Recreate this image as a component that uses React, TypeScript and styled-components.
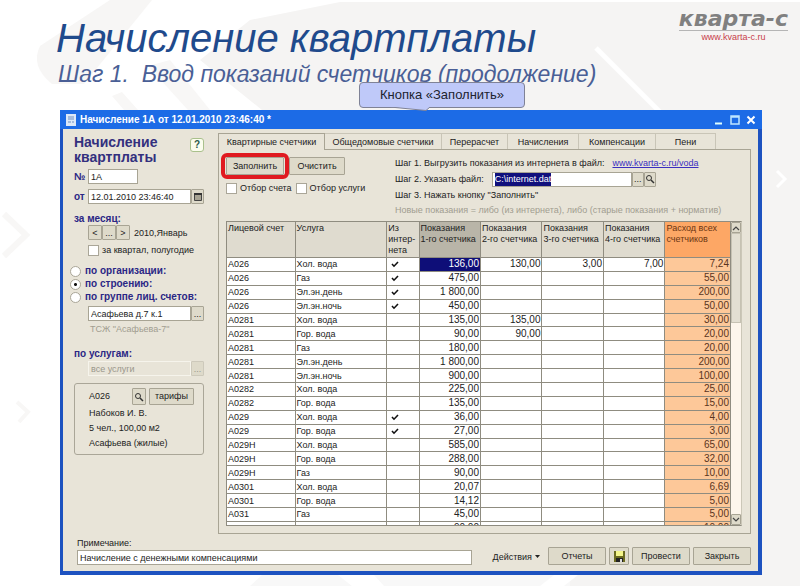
import React from "react";
import styled, { createGlobalStyle, css } from "styled-components";

const Global = createGlobalStyle`
  * { box-sizing: border-box; }
  body { margin: 0; background: #fff; font-family: "Liberation Sans", Arial, sans-serif; }
  button, input { font: inherit; color: inherit; }
`;

const Slide = styled.main`
  position: relative;
  padding: 18px 38px 11px 60px;
  overflow: hidden;
`;
const Backdrop = styled.svg`
  position: absolute;
  inset: 0;
  width: 100%;
  height: 100%;
  z-index: -1;
`;
const Header = styled.header`
  position: relative;
  height: 92px;
`;
const Title = styled.h1`
  margin: 0 0 0 -4px;
  font-size: 40px;
  line-height: 40px;
  font-weight: 400;
  font-style: italic;
  color: #1f4a8c;
  white-space: nowrap;
`;
const Subtitle = styled.p`
  margin: 4px 0 0 -2px;
  font-size: 23px;
  line-height: 24px;
  font-style: italic;
  color: #4a5f96;
  white-space: pre;
`;
const Brand = styled.div`
  position: absolute;
  top: -10px;
  right: -26px;
  display: flex;
  flex-direction: column;
  align-items: center;
`;
const BrandName = styled.strong`
  font-family: "DejaVu Sans", sans-serif;
  font-size: 22px;
  line-height: 22px;
  font-style: italic;
  color: #808080;
  border-bottom: 1px solid #b5b5b5;
`;
const BrandLink = styled.a`
  font-size: 9px;
  line-height: 12px;
  color: #c8404a;
  text-decoration: none;
`;
const Callout = styled.div`
  position: absolute;
  top: 64px;
  left: 299px;
  width: 166px;
  height: 26px;
  border: 1px solid #7f8296;
  border-radius: 4px;
  background: #bfc9f9;
  color: #20232e;
  font-size: 13px;
  line-height: 24px;
  text-align: center;
  white-space: nowrap;
`;
const CalloutTail = styled.svg`
  position: absolute;
  top: 24px;
  left: 30px;
`;

const Window = styled.section`
  border: solid #1d52c0;
  border-width: 0 4px 4px 3px;
  background: #e8e4d8;
  font-size: 9px;
  line-height: 12px;
  color: #222;
  white-space: nowrap;
`;
const TitleBar = styled.div`
  display: flex;
  align-items: center;
  gap: 4px;
  height: 19px;
  margin: 0 -4px 0 -3px;
  padding: 1px 6px;
  background: #1c6be6;
  color: #fff;
  font-size: 10px;
  font-weight: 700;
`;
const WindowTitle = styled.span`
  flex: 1;
`;
const WindowButton = styled.button`
  display: flex;
  padding: 0;
  margin-left: 2px;
  border: 0;
  background: none;
`;
const Body = styled.div`
  display: grid;
  grid-template-columns: 155px 1fr;
  padding: 4px 7px 0 0;
`;

const Side = styled.aside`
  display: flex;
  flex-direction: column;
  padding: 2px 14px 0 11px;
`;
const SideHead = styled.div`
  display: flex;
  justify-content: space-between;
  align-items: flex-start;
  margin-bottom: 4px;
`;
const SideTitle = styled.h2`
  margin: 0;
  font-size: 14px;
  line-height: 15px;
  color: #33307e;
`;
const HelpButton = styled.button`
  width: 14px;
  height: 14px;
  margin-top: 3px;
  padding: 0;
  border: 1px solid #a9c08c;
  border-radius: 3px;
  background: #fbfdee;
  font-size: 10px;
  font-weight: 700;
  line-height: 10px;
  color: #2b5a4a;
`;
const Line = styled.div<{ $gap?: number; $indent?: boolean }>`
  display: flex;
  align-items: center;
  margin-bottom: ${(p) => p.$gap ?? 0}px;
  padding-left: ${(p) => (p.$indent ? 14 : 0)}px;
`;
const Caption = styled.label<{ $narrow?: boolean }>`
  ${(p) => p.$narrow && css`width: 14px;`}
  font-size: 10px;
  font-weight: 700;
  color: #2b2785;
`;
const Field = styled.input<{ $w?: number }>`
  ${(p) => (p.$w ? css`width: ${p.$w}px;` : css`flex: 1;`)}
  min-width: 0;
  height: 15px;
  padding: 0 2px;
  border: 1px solid #a8a494;
  border-radius: 0;
  background: #fff;
  &:disabled { background: #e8e4d8; color: #9a978b; border-color: #f6f4ec; }
`;
const Push = styled.button<{ $w?: number; $h?: number }>`
  display: flex;
  align-items: center;
  justify-content: center;
  ${(p) => p.$w && css`width: ${p.$w}px;`}
  height: ${(p) => p.$h ?? 15}px;
  padding: 0;
  border: 1px solid #a8a494;
  border-radius: 1px;
  background: #dedaca;
  &:disabled { color: #9a978b; border-color: #cdc9bb; }
`;
const Value = styled.span<{ $dim?: boolean }>`
  margin-left: ${(p) => (p.$dim ? 2 : 4)}px;
  color: ${(p) => (p.$dim ? "#a19d90" : "inherit")};
`;
const Check = styled.input`
  appearance: none;
  width: 11px;
  height: 11px;
  margin: 0 3px 0 0;
  border: 1px solid #aaa698;
  background: #fff;
`;
const Radio = styled.input`
  appearance: none;
  width: 11px;
  height: 11px;
  margin: 0 4px 0 -4px;
  border: 1px solid #aaa698;
  border-radius: 50%;
  background: #fff;
  &:checked { background: radial-gradient(circle, #111 0 1px, #fff 2px); }
`;
const Account = styled.div`
  display: flex;
  flex-direction: column;
  height: 72px;
  padding: 4px 9px 0 14px;
  border: 1px solid #aaa698;
  border-radius: 3px;
  line-height: 15px;
`;
const AccountHead = styled.div`
  display: grid;
  grid-template-columns: 1fr 14px 45px;
  column-gap: 3px;
  align-items: center;
  margin-bottom: 1px;
`;

const Main = styled.section`
  min-width: 0;
`;
const Tabs = styled.div`
  display: flex;
  height: 16px;
`;
const Tab = styled.button<{ $w: number; $active?: boolean }>`
  width: ${(p) => p.$w}px;
  padding: 0;
  border: solid #c9c5b7;
  border-width: 1px 1px 0 0;
  background: none;
  ${(p) =>
    p.$active &&
    css`
      position: relative;
      height: 17px;
      border-color: #a8a494;
      border-left-width: 1px;
      background: #e8e4d8;
    `}
`;
const Panel = styled.div`
  height: 385px;
  padding: 5px 8px 0 7px;
  border: 1px solid #a8a494;
`;
const Tools = styled.div`
  display: grid;
  grid-template-columns: 169px 1fr;
  height: 66px;
`;
const ToolButtons = styled.div`
  display: flex;
  gap: 4px;
  margin: 2px 0 7px 1px;
`;
const Ring = styled.div`
  margin: -4px -4px -4px -6px;
  border: 4px solid #e01a20;
  border-radius: 6px;
  padding: 0 1px;
`;
const Steps = styled.div`
  display: flex;
  flex-direction: column;
  line-height: 16px;
`;
const StepLink = styled.a`
  margin-left: 8px;
  color: #3a2fc0;
`;
const FileField = styled(Field)`
  margin-left: 8px;
  &:focus { outline: none; }
  &::selection { background: #10107c; color: #fff; }
`;
const Hint = styled.span`
  line-height: 14px;
  color: #a19d90;
`;

const Sheet = styled.div`
  display: flex;
  height: 305px;
  border: 1px solid #8f8c80;
  border-right-color: #cbc7b8;
`;
const Clip = styled.div`
  flex: 1;
  overflow: hidden;
`;
const Table = styled.table`
  width: 100%;
  height: 314px;
  table-layout: fixed;
  border-collapse: separate;
  border-spacing: 0;
`;
const Th = styled.th<{ $tone?: "dark" | "sum" }>`
  height: 36px;
  padding: 1px 0 0 1px;
  border: solid #8f8c80;
  border-width: 0 1px 1px 0;
  background: ${(p) => (p.$tone === "dark" ? "#b9b5a8" : p.$tone === "sum" ? "#fda765" : "#dfdbcf")};
  color: ${(p) => (p.$tone === "sum" ? "#6b3512" : "#222")};
  font-weight: 400;
  line-height: 11px;
  text-align: left;
  vertical-align: top;
  white-space: pre;
`;
const Td = styled.td<{ $kind?: "num" | "sum" | "picked" | "mark" }>`
  padding: 0 1px;
  border: solid #8f8c80;
  border-width: 0 1px 1px 0;
  background: #fff;
  line-height: 12px;
  text-align: left;
  ${(p) =>
    (p.$kind === "num" || p.$kind === "sum" || p.$kind === "picked") &&
    css`text-align: right; font-size: 10px;`}
  ${(p) => p.$kind === "sum" && css`background: #fdc899; color: #5a3420;`}
  ${(p) => p.$kind === "picked" && css`background: #0e0e78; color: #fff;`}
  ${(p) => p.$kind === "mark" && css`padding-left: 4px;`}
  svg { display: block; }
`;
const ScrollBar = styled.div`
  display: flex;
  flex-direction: column;
  justify-content: space-between;
  width: 10px;
  background: #fdf6ec;
`;
const ScrollThumb = styled.div`
  flex: 0 0 90px;
  margin-bottom: auto;
  border: 1px solid #c6c2b3;
  background: #e3dfd2;
`;

const Footer = styled.footer`
  display: flex;
  align-items: flex-end;
  gap: 3px;
  padding: 3px 7px 6px 14px;
`;
const Note = styled.div`
  flex: 1;
  display: flex;
  flex-direction: column;
  gap: 1px;
  margin-right: 14px;
`;
const NoteInput = styled(Field)`
  flex: none;
  width: 100%;
`;
const Menu = styled.button`
  display: flex;
  align-items: center;
  gap: 3px;
  height: 17px;
  padding: 0 5px 0 4px;
  border: 0;
  background: none;
`;

const Magnifier = () => (
  <svg width="10" height="10" viewBox="0 0 10 10" fill="none" stroke="#333">
    <circle cx="4" cy="4" r="2.5" />
    <path d="M6 6l3 3" strokeWidth="1.5" />
  </svg>
);
const Tick = () => (
  <svg width="8" height="8" viewBox="0 0 8 8" fill="none" stroke="#111" strokeWidth="1.6">
    <path d="M1 4l2 2.2L7 2" />
  </svg>
);
const Chevron = ({ down }: { down?: boolean }) => (
  <svg width="8" height="6" viewBox="0 0 8 6" fill="none" stroke="#444" strokeWidth="1.2">
    <path d={down ? "M1 1l3 3 3-3" : "M1 5l3-3 3 3"} />
  </svg>
);

type Row = [string, string, boolean, string, string, string, string, string];
const rows: Row[] = [
  ["А026", "Хол. вода", true, "136,00", "130,00", "3,00", "7,00", "7,24"],
  ["А026", "Газ", true, "475,00", "", "", "", "55,00"],
  ["А026", "Эл.эн.день", true, "1 800,00", "", "", "", "200,00"],
  ["А026", "Эл.эн.ночь", true, "450,00", "", "", "", "50,00"],
  ["А0281", "Хол. вода", false, "135,00", "135,00", "", "", "30,00"],
  ["А0281", "Гор. вода", false, "90,00", "90,00", "", "", "20,00"],
  ["А0281", "Газ", false, "180,00", "", "", "", "20,00"],
  ["А0281", "Эл.эн.день", false, "1 800,00", "", "", "", "200,00"],
  ["А0281", "Эл.эн.ночь", false, "900,00", "", "", "", "100,00"],
  ["А0282", "Хол. вода", false, "225,00", "", "", "", "25,00"],
  ["А0282", "Гор. вода", false, "135,00", "", "", "", "15,00"],
  ["А029", "Хол. вода", true, "36,00", "", "", "", "4,00"],
  ["А029", "Гор. вода", true, "27,00", "", "", "", "3,00"],
  ["А029Н", "Хол. вода", false, "585,00", "", "", "", "65,00"],
  ["А029Н", "Гор. вода", false, "288,00", "", "", "", "32,00"],
  ["А029Н", "Газ", false, "90,00", "", "", "", "10,00"],
  ["А0301", "Хол. вода", false, "20,07", "", "", "", "6,69"],
  ["А0301", "Гор. вода", false, "14,12", "", "", "", "5,00"],
  ["А031", "Газ", false, "45,00", "", "", "", "5,00"],
  ["А032", "Хол. вода", false, "90,00", "", "", "", "10,00"],
];
const columns: { label: string; width: string; tone?: "dark" | "sum" }[] = [
  { label: "Лицевой счет", width: "13.6%" },
  { label: "Услуга", width: "18.2%" },
  { label: "Из\nинтер-\nнета", width: "6.4%" },
  { label: "Показания\n1-го счетчика", width: "12.2%", tone: "dark" },
  { label: "Показания\n2-го счетчика", width: "12.2%" },
  { label: "Показания\n3-го счетчика", width: "12.2%" },
  { label: "Показания\n4-го счетчика", width: "12.2%" },
  { label: "Расход всех\nсчетчиков", width: "13%", tone: "sum" },
];
const tabs: [string, number][] = [
  ["Квартирные счетчики", 107],
  ["Общедомовые счетчики", 117],
  ["Перерасчет", 66],
  ["Начисления", 71],
  ["Компенсации", 77],
  ["Пени", 60],
];

export default function App() {
  const file = React.useRef<HTMLInputElement>(null);
  React.useEffect(() => {
    file.current?.focus({ preventScroll: true });
    file.current?.select();
  }, []);

  return (
    <>
      <Global />
      <Slide>
        <Backdrop viewBox="0 0 800 586" preserveAspectRatio="none">
          <path d="M340 2H800V586H570V110H262L200 60L250 20Z" fill="#f5f4f3" />
          <path d="M110 0H152L84 84H52Q30 66 40 46Z" fill="#f7f6f5" />
          <path d="M170 60l40 50h-22l-40-44z" fill="#f8f7f6" />
          <path d="M112 96l10-4 16 18h-14z" fill="#f8f7f6" />
          <path d="M596 48l64 64" stroke="#fff" strokeWidth="5" />
          <path d="M777 171l8 8-8 8" stroke="#fff" strokeWidth="3" fill="none" />
          <path d="M17 402l11 10-9 10" stroke="#f8f7f6" strokeWidth="4" fill="none" />
          <path d="M4 214l22 21-22 21" stroke="#f8f7f6" strokeWidth="6" fill="none" />
          <path d="M250 586l12-11h76l14 11zM374 575h196v11H384z" fill="#f8f8f8" />
          <path d="M540 586l14-11h24l-14 11z" fill="#fff" />
        </Backdrop>
        <Header>
          <Title>Начисление квартплаты</Title>
          <Subtitle>Шаг 1.  Ввод показаний счетчиков (продолжение)</Subtitle>
          <Brand>
            <BrandName>кварта-с</BrandName>
            <BrandLink href="#">www.kvarta-c.ru</BrandLink>
          </Brand>
          <Callout>
            Кнопка «Заполнить»
            <CalloutTail width="42" height="4" viewBox="0 0 42 4">
              <path d="M0 0L36 3.5L40 0" fill="#bfc9f9" stroke="#7f8296" />
            </CalloutTail>
          </Callout>
        </Header>

        <Window>
          <TitleBar>
            <svg width="10" height="12" viewBox="0 0 10 12">
              <path d="M0 0h10v12H0z" fill="#dce8f8" />
              <path d="M2 3h6M2 5h6M2 8h3M6 8h2" stroke="#6d8fc4" />
            </svg>
            <WindowTitle>Начисление 1А от 12.01.2010 23:46:40 *</WindowTitle>
            <WindowButton aria-label="Свернуть">
              <svg width="10" height="10"><path d="M1 8.500h7" stroke="#dff" strokeWidth="2" /></svg>
            </WindowButton>
            <WindowButton aria-label="Развернуть">
              <svg width="10" height="10"><path d="M1 1h8v8H1zM1 2h8" stroke="#bfe6ff" strokeWidth="1.500" fill="none" /></svg>
            </WindowButton>
            <WindowButton aria-label="Закрыть окно">
              <svg width="10" height="10"><path d="M1.500 1.500l7 7M8.500 1.500l-7 7" stroke="#fff" strokeWidth="2" /></svg>
            </WindowButton>
          </TitleBar>

          <Body>
            <Side>
              <SideHead>
                <SideTitle>Начисление<br />квартплаты</SideTitle>
                <HelpButton aria-label="Справка">?</HelpButton>
              </SideHead>
              <Line $gap={5}>
                <Caption $narrow htmlFor="num">№</Caption>
                <Field id="num" $w={50} defaultValue="1А" />
              </Line>
              <Line $gap={9}>
                <Caption $narrow htmlFor="date">от</Caption>
                <Field id="date" defaultValue="12.01.2010 23:46:40" />
                <Push $w={13} aria-label="Календарь">
                  <svg width="8" height="8"><path d="M.5 1.500h7v6h-7z" fill="#a7a393" stroke="#444" /><path d="M0 1h8" stroke="#333" strokeWidth="2" /></svg>
                </Push>
              </Line>
              <Line><Caption as="span">за месяц:</Caption></Line>
              <Line $indent $gap={4}>
                <Push $w={14} aria-label="Предыдущий месяц">&lt;</Push>
                <Push $w={14} aria-label="Выбрать месяц">...</Push>
                <Push $w={14} aria-label="Следующий месяц">&gt;</Push>
                <Value>2010,Январь</Value>
              </Line>
              <Line $indent $gap={9}>
                <Check type="checkbox" id="quarter" />
                <label htmlFor="quarter">за квартал, полугодие</label>
              </Line>
              <Line $gap={1}>
                <Radio type="radio" name="scope" id="org" />
                <Caption htmlFor="org">по организации:</Caption>
              </Line>
              <Line $gap={1}>
                <Radio type="radio" name="scope" id="house" defaultChecked />
                <Caption htmlFor="house">по строению:</Caption>
              </Line>
              <Line $gap={3}>
                <Radio type="radio" name="scope" id="group" />
                <Caption htmlFor="group">по группе лиц. счетов:</Caption>
              </Line>
              <Line $indent $gap={2}>
                <Field aria-label="Строение" defaultValue="Асафьева д.7 к.1" />
                <Push $w={13} aria-label="Выбрать строение">...</Push>
              </Line>
              <Line $indent $gap={13}><Value $dim>ТСЖ "Асафьева-7"</Value></Line>
              <Line $gap={1}><Caption htmlFor="services">по услугам:</Caption></Line>
              <Line $indent $gap={7}>
                <Field id="services" disabled defaultValue="все услуги" />
                <Push $w={13} disabled aria-label="Выбрать услуги">...</Push>
              </Line>
              <Account>
                <AccountHead>
                  <span>А026</span>
                  <Push $h={17} aria-label="Найти счет"><Magnifier /></Push>
                  <Push $h={17}>тарифы</Push>
                </AccountHead>
                <span>Набоков И. В.</span>
                <span>5 чел., 100,00 м2</span>
                <span>Асафьева (жилые)</span>
              </Account>
            </Side>

            <Main>
              <Tabs role="tablist">
                {tabs.map(([name, w], i) => (
                  <Tab key={name} role="tab" aria-selected={i === 0} $w={w} $active={i === 0}>{name}</Tab>
                ))}
              </Tabs>
              <Panel>
                <Tools>
                  <div>
                    <ToolButtons>
                      <Ring><Push $w={58} $h={18}>Заполнить</Push></Ring>
                      <Push $w={56} $h={18}>Очистить</Push>
                    </ToolButtons>
                    <Line>
                      <Check type="checkbox" id="byAccount" />
                      <label htmlFor="byAccount">Отбор счета</label>
                      <Value />
                      <Check type="checkbox" id="byService" />
                      <label htmlFor="byService">Отбор услуги</label>
                    </Line>
                  </div>
                  <Steps>
                    <span>
                      Шаг 1. Выгрузить показания из интернета в файл:
                      <StepLink href="#">www.kvarta-c.ru/voda</StepLink>
                    </span>
                    <Line>
                      <label htmlFor="file">Шаг 2. Указать файл:</label>
                      <FileField ref={file} id="file" $w={140} defaultValue="C:\internet.dat" />
                      <Push $w={12} aria-label="Выбрать файл">...</Push>
                      <Push $w={12} aria-label="Открыть файл"><Magnifier /></Push>
                    </Line>
                    <span>Шаг 3. Нажать кнопку "Заполнить"</span>
                    <Hint>Новые показания = либо (из интернета), либо (старые показания + норматив)</Hint>
                  </Steps>
                </Tools>
                <Sheet>
                  <Clip>
                    <Table>
                      <colgroup>
                        {columns.map((c) => <col key={c.label} width={c.width} />)}
                      </colgroup>
                      <thead>
                        <tr>{columns.map((c) => <Th key={c.label} $tone={c.tone}>{c.label}</Th>)}</tr>
                      </thead>
                      <tbody>
                        {rows.map((r, i) => (
                          <tr key={i}>
                            <Td>{r[0]}</Td>
                            <Td>{r[1]}</Td>
                            <Td $kind="mark">{r[2] && <Tick />}</Td>
                            <Td $kind={i === 0 ? "picked" : "num"}>{r[3]}</Td>
                            <Td $kind="num">{r[4]}</Td>
                            <Td $kind="num">{r[5]}</Td>
                            <Td $kind="num">{r[6]}</Td>
                            <Td $kind="sum">{r[7]}</Td>
                          </tr>
                        ))}
                      </tbody>
                    </Table>
                  </Clip>
                  <ScrollBar>
                    <Push $h={11} aria-label="Вверх"><Chevron /></Push>
                    <ScrollThumb />
                    <Push $h={11} aria-label="Вниз"><Chevron down /></Push>
                  </ScrollBar>
                </Sheet>
              </Panel>
            </Main>
          </Body>

          <Footer>
            <Note>
              <label htmlFor="note">Примечание:</label>
              <NoteInput id="note" defaultValue="Начисление с денежными компенсациями" />
            </Note>
            <Menu>
              Действия
              <svg width="5" height="3"><path d="M0 0h5L2.500 3z" fill="#222" /></svg>
            </Menu>
            <Push $w={58} $h={18}>Отчеты</Push>
            <Push $w={20} $h={18} aria-label="Сохранить">
              <svg width="11" height="11" viewBox="0 0 11 11">
                <path d="M0 0h11v11H0z" fill="#6b6a20" />
                <path d="M2 0h7v5H2z" fill="#f4f58a" />
                <path d="M2 7h7v4H2z" fill="#222" />
                <path d="M6 8h2v3H6z" fill="#ddd" />
              </svg>
            </Push>
            <Push $w={58} $h={18}>Провести</Push>
            <Push $w={58} $h={18}>Закрыть</Push>
          </Footer>
        </Window>
      </Slide>
    </>
  );
}
